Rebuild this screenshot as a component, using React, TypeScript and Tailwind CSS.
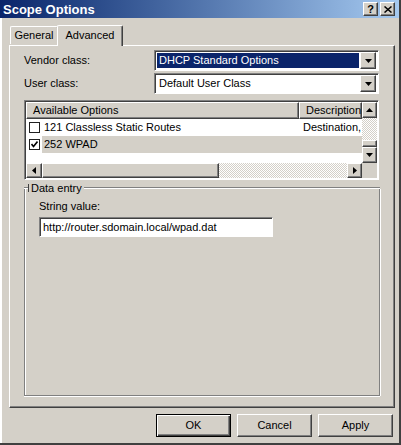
import React from 'react';

const raised =
  'border border-t-white border-l-white border-r-[#404040] border-b-[#404040] shadow-[inset_-1px_-1px_#808080]';
const sunken =
  'border border-t-[#808080] border-l-[#808080] border-r-white border-b-white shadow-[inset_1px_1px_#404040]';
const checker =
  'bg-[repeating-conic-gradient(#ffffff_0%_25%,#d4d0c8_0%_50%)] bg-[length:2px_2px]';

const Arrow = ({ dir }: { dir: 'up' | 'down' | 'left' | 'right' }) => {
  const pts = {
    down: '0,0 7,0 3.5,4',
    up: '0,4 7,4 3.5,0',
    left: '4,0 4,7 0,3.5',
    right: '0,0 0,7 4,3.5',
  }[dir];
  const horiz = dir === 'left' || dir === 'right';
  return (
    <svg width={horiz ? 4 : 7} height={horiz ? 7 : 4} viewBox={horiz ? '0 0 4 7' : '0 0 7 4'}>
      <polygon points={pts} fill="#000" />
    </svg>
  );
};

const ScrollBtn = ({ dir, className = '' }: { dir: 'up' | 'down' | 'left' | 'right'; className?: string }) => (
  <div className={`flex items-center justify-center bg-[#d4d0c8] ${raised} ${className}`}>
    <Arrow dir={dir} />
  </div>
);

const Combo = ({ value, selected }: { value: string; selected?: boolean }) => (
  <div className={`w-[225px] h-[21px] flex items-center bg-white ${sunken} p-[2px]`}>
    <div className={`flex-1 h-full flex items-center px-[2px] ${selected ? 'bg-[#0a246a] text-white' : 'text-black'}`}>
      {value}
    </div>
    <ScrollBtn dir="down" className="w-[16px] h-[17px] ml-[1px]" />
  </div>
);

const Check = ({ on }: { on?: boolean }) => (
  <div className="w-[11px] h-[11px] bg-white border border-[#202020] flex items-center justify-center">
    {on && (
      <svg width="7" height="7" viewBox="0 0 7 7">
        <polyline points="0.5,3 2.5,5.5 6.5,0.5" fill="none" stroke="#000" strokeWidth="1.6" />
      </svg>
    )}
  </div>
);

const Btn = ({ label, isDefault }: { label: string; isDefault?: boolean }) => (
  <div
    className={`w-[75px] h-[23px] flex items-center justify-center bg-[#d4d0c8] ${
      isDefault
        ? 'border border-black shadow-[inset_1px_1px_white,inset_-1px_-1px_#404040,inset_-2px_-2px_#808080]'
        : raised
    }`}
  >
    {label}
  </div>
);

export default function App() {
  return (
    <div
      className="w-[401px] h-[445px] bg-[#d4d0c8] flex flex-col text-[11px] text-black border-r-2 border-b-2 border-r-[#404040] border-b-[#404040] overflow-hidden"
      style={{ fontFamily: '"Liberation Sans", Arial, sans-serif' }}
    >
      {/* title bar */}
      <div className="h-[18px] shrink-0 flex items-center bg-gradient-to-r from-[#0a246a] to-[#a6caf0] pl-[3px] pr-[4px]">
        <span className="flex-1 text-white font-bold text-[13px] leading-none">Scope Options</span>
        <div className={`w-[15px] h-[14px] flex items-center justify-center bg-[#d4d0c8] ${raised} font-bold text-[11px] leading-none`}>
          ?
        </div>
        <div className={`w-[15px] h-[14px] ml-[2px] flex items-center justify-center bg-[#d4d0c8] ${raised}`}>
          <svg width="8" height="7" viewBox="0 0 8 7">
            <path d="M0.5 0.5 L7.5 6.5 M7.5 0.5 L0.5 6.5" stroke="#000" strokeWidth="1.5" />
          </svg>
        </div>
      </div>

      <div className="flex-1 flex flex-col pl-[7px] pr-[6px] border-l-2 border-l-white">
        {/* tabs */}
        <div className="h-[27px] flex items-end pl-[1px] relative z-10">
          <div className="w-[48px] h-[18px] mb-[1px] border-t border-l border-t-white border-l-white border-r border-r-[#404040] rounded-t-[2px] flex items-center justify-center">
            General
          </div>
          <div className="w-[66px] h-[21px] -ml-[1px] -mb-[1px] bg-[#d4d0c8] border-t border-l border-t-white border-l-white border-r border-r-[#404040] shadow-[inset_-1px_0_#808080] rounded-t-[2px] flex items-center justify-center pb-[2px]">
            Advanced
          </div>
        </div>

        {/* tab panel */}
        <div className={`w-[386px] h-[363px] ${raised} pl-[14px] pt-[4px] flex flex-col`}>
          <div className="h-[21px] flex items-center">
            <span className="w-[130px]">Vendor class:</span>
            <Combo value="DHCP Standard Options" selected />
          </div>
          <div className="h-[21px] mt-[2px] flex items-center">
            <span className="w-[130px]">User class:</span>
            <Combo value="Default User Class" />
          </div>

          {/* list view */}
          <div className={`mt-[6px] w-[355px] h-[80px] bg-white ${sunken} p-[1px] flex flex-col`}>
            <div className="flex flex-1 min-h-0">
              <div className="flex-1 flex flex-col">
                <div className="h-[17px] flex shrink-0">
                  <div className={`w-[273px] ${raised} bg-[#d4d0c8] flex items-center pl-[6px]`}>Available Options</div>
                  <div className={`flex-1 ${raised} bg-[#d4d0c8] flex items-center pl-[6px] overflow-hidden whitespace-nowrap`}>
                    Description
                  </div>
                </div>
                <div className="h-[17px] flex items-center pl-[3px]">
                  <Check />
                  <span className="ml-[4px] w-[258px]">121 Classless Static Routes</span>
                  <span className="ml-[1px]">Destination,</span>
                </div>
                <div className="h-[17px] flex items-center pl-[3px]">
                  <Check on />
                  <div className="ml-[2px] flex-1 h-full bg-[#d4d0c8] flex items-center pl-[2px]">252 WPAD</div>
                </div>
              </div>
              <div className="w-[15px] flex flex-col">
                <ScrollBtn dir="up" className="h-[16px] shrink-0" />
                <div className={`flex-1 ${checker}`} />
                <div className={`h-[7px] bg-[#d4d0c8] ${raised}`} />
                <ScrollBtn dir="down" className="h-[16px] shrink-0" />
              </div>
            </div>
            <div className="h-[15px] flex shrink-0">
              <ScrollBtn dir="left" className="w-[16px]" />
              <div className={`w-[177px] bg-[#d4d0c8] ${raised}`} />
              <div className={`flex-1 ${checker}`} />
              <ScrollBtn dir="right" className="w-[15px]" />
              <div className="w-[15px] bg-[#d4d0c8]" />
            </div>
          </div>

          {/* group box */}
          <div className="mt-[3px] w-[356px] h-[213px] flex flex-col">
            <div className="h-[10px] flex items-end relative">
              <div className="absolute left-0 right-0 top-[4px] h-[2px] border-t border-t-[#808080] border-b border-b-white" />
              <div className="relative ml-[4px] bg-[#d4d0c8] flex items-center h-[10px] pr-[2px]">
                <span className="w-[1px] h-[8px] bg-[#404040] mr-[2px]" />
                <span className="leading-none">Data entry</span>
              </div>
            </div>
            <div className="flex-1 -mt-[4px] border-l border-l-[#808080] border-b border-b-[#808080] border-r border-r-[#808080] shadow-[inset_1px_0_white,1px_0_white,0_1px_white] pl-[14px] pt-[11px]">
              <div className="h-[13px] flex items-center">String value:</div>
              <div className={`mt-[4px] w-[234px] h-[20px] bg-white ${sunken} flex items-center pl-[3px]`}>
                http://router.sdomain.local/wpad.dat
              </div>
            </div>
          </div>
        </div>

        {/* buttons */}
        <div className="mt-[6px] flex justify-end gap-[6px]">
          <Btn label="OK" isDefault />
          <Btn label="Cancel" />
          <Btn label="Apply" />
        </div>
      </div>
    </div>
  );
}
